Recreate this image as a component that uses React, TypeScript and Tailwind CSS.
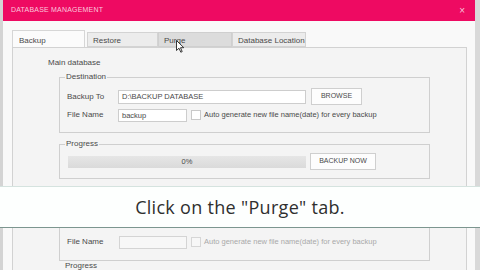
import React from 'react';

const tabs = ['Backup', 'Restore', 'Purge', 'Database Location'];

function Cursor() {
  return (
    <svg className="absolute left-[176px] top-[40px]" width="9" height="13" viewBox="0 0 9 13">
      <path d="M0.5 0.5 L0.5 10.5 L3 8.2 L4.8 12.2 L6.2 11.6 L4.5 7.7 L7.8 7.7 Z" fill="#fff" stroke="#222" strokeWidth="0.9" />
    </svg>
  );
}

export default function App() {
  return (
    <div
      className="relative w-[480px] h-[270px] overflow-hidden bg-[#dcdcdc] text-[#4a4a4a]"
      style={{ fontFamily: '"Liberation Sans", Arial, sans-serif' }}
    >
      {/* upper frame */}
      <div className="flex h-[186px] overflow-hidden">
        <div className="w-[3px] bg-[#d4d4d4]" />
        <div className="flex flex-col w-[472px] bg-[#f9f9f9]">
          <div className="h-[21px] bg-[#ee0a62] flex items-center justify-between pl-[8px] pr-[10px]">
            <span className="text-[7px] tracking-[0.2px] text-[#fbc6dc]">DATABASE MANAGEMENT</span>
            <span className="text-[10px] leading-none text-[#f7c3d8]">×</span>
          </div>
          <div className="flex-1 pl-[9px] pr-[8px] pt-[9px] flex flex-col">
            <div className="flex items-end h-[17px]">
              {tabs.map((t, i) => (
                <div
                  key={t}
                  className={
                    i === 0
                      ? 'w-[73px] h-[17px] border border-b-0 border-[#d6d6d6] bg-[#fbfbfb] text-[8px] pl-[6px] pt-[4px]'
                      : i === 2
                      ? 'w-[74px] h-[15px] border border-[#cfcfcf] bg-[#dcdcdc] text-[8px] pl-[5px] pt-[2px]'
                      : i === 1
                      ? 'ml-[2px] w-[71px] h-[15px] border border-[#d3d3d3] bg-[#ececec] text-[8px] pl-[5px] pt-[2px]'
                      : 'w-[74px] h-[15px] border border-[#d3d3d3] bg-[#ececec] text-[8px] pl-[5px] pt-[2px]'
                  }
                >
                  {t}
                </div>
              ))}
            </div>
            <div className="flex-1 border border-b-0 border-[#d2d2d2] bg-[#f4f4f4] pl-[35px] pr-[37px]">
              <div className="text-[8px] pt-[9px] h-[23px]">Main database</div>
              <fieldset className="border border-[#cfcfcf] ml-[11px] px-[7px] pb-[10px] w-[371px]">
                <legend className="text-[8px] px-[1px] ml-[-2px]">Destination</legend>
                <div className="flex items-center h-[17px] mt-[5px]">
                  <span className="w-[51px] text-[8px]">Backup To</span>
                  <div className="w-[188px] h-[14px] border border-[#cdcdcd] bg-white text-[7.5px] pl-[3px] leading-[12px]">
                    D:\BACKUP DATABASE
                  </div>
                  <div className="ml-[5px] w-[51px] h-[17px] border border-[#cfcfcf] bg-[#fdfdfd] text-[7px] flex items-center justify-center">
                    BROWSE
                  </div>
                </div>
                <div className="flex items-center h-[14px] mt-[3px]">
                  <span className="w-[51px] text-[8px]">File Name</span>
                  <div className="w-[69px] h-[13px] border border-[#cdcdcd] bg-white text-[7.5px] pl-[3px] leading-[11px]">
                    backup
                  </div>
                  <div className="ml-[4px] w-[10px] h-[10px] border border-[#c9c9c9] bg-white" />
                  <span className="ml-[3px] text-[7.5px] whitespace-nowrap">
                    Auto generate new file name(date) for every backup
                  </span>
                </div>
              </fieldset>
              <fieldset className="border border-[#cfcfcf] ml-[11px] mt-[5px] px-[8px] pb-[8px] w-[371px]">
                <legend className="text-[8px] px-[1px] ml-[-3px]">Progress</legend>
                <div className="flex items-center mt-[3px]">
                  <div className="w-[238px] h-[12px] bg-gradient-to-b from-[#e6e6e6] to-[#dadada] text-[7.5px] flex items-center justify-center">
                    0%
                  </div>
                  <div className="ml-[4px] w-[66px] h-[17px] border border-[#cfcfcf] bg-[#fdfdfd] text-[7px] flex items-center justify-center">
                    BACKUP NOW
                  </div>
                </div>
              </fieldset>
            </div>
          </div>
        </div>
        <div className="w-[5px] bg-[#d9d9d9]" />
      </div>

      {/* caption band */}
      <div className="h-[42px] bg-[#fdfffe] border-t border-[#d5e3df] border-b-[1.5px] border-b-[#7c968f] flex items-center justify-center">
        <span className="text-[18px] tracking-[0.3px] text-[#2f2f2f]" style={{ fontFamily: '"Open Sans", "DejaVu Sans", sans-serif' }}>
          Click on the "Purge" tab.
        </span>
      </div>

      {/* lower frame */}
      <div className="flex h-[42px] overflow-hidden">
        <div className="w-[3px] bg-[#d4d4d4]" />
        <div className="w-[472px] bg-[#f9f9f9] pl-[9px] pr-[8px]">
          <div className="h-full border-l border-r border-[#d2d2d2] bg-[#f4f4f4] pl-[46px]">
            <div className="w-[371px] h-[33px] border border-t-0 border-[#cfcfcf] px-[7px] pt-[7px]">
              <div className="flex items-center h-[14px]">
                <span className="w-[52px] text-[8px]">File Name</span>
                <div className="w-[68px] h-[13px] border border-[#d4d4d4] bg-[#f7f7f7]" />
                <div className="ml-[4px] w-[10px] h-[10px] border border-[#d6d6d6] bg-[#f7f7f7]" />
                <span className="ml-[3px] text-[7.5px] whitespace-nowrap text-[#a9a9a9]">
                  Auto generate new file name(date) for every backup
                </span>
              </div>
            </div>
            <div className="text-[8px] leading-[8px] pl-[6px] mt-[1px]">Progress</div>
          </div>
        </div>
        <div className="w-[5px] bg-[#d9d9d9]" />
      </div>

      <Cursor />
    </div>
  );
}
